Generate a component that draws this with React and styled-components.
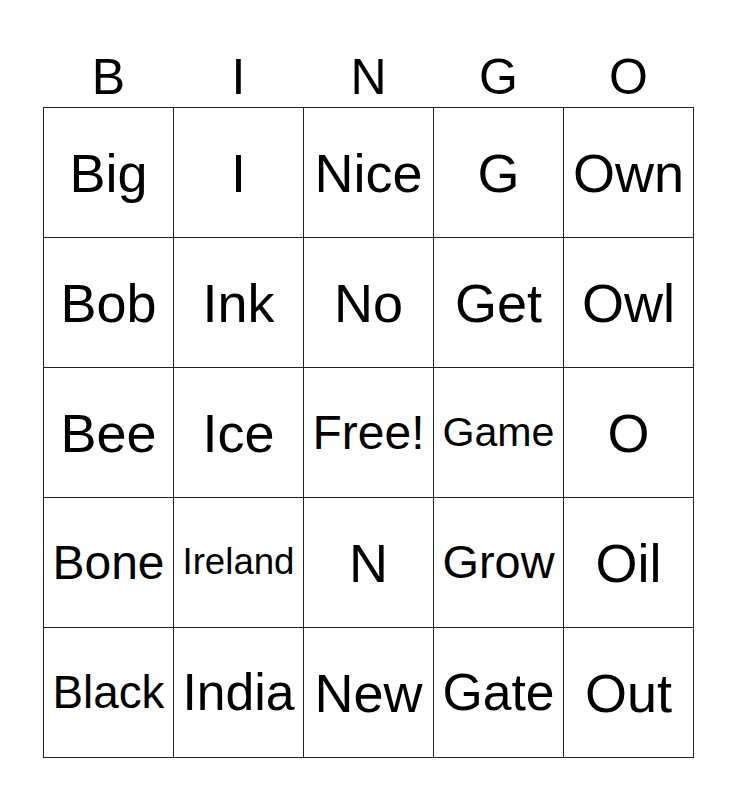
import React from "react";
import styled, { createGlobalStyle } from "styled-components";

const Global = createGlobalStyle`
  html, body { margin: 0; padding: 0; background: #fff; }
  body { font-family: "Liberation Sans", Arial, sans-serif; color: #000; }
`;

const Page = styled.div`
  padding: 52px 0 0 43px;
  width: 736px;
  height: 800px;
  box-sizing: border-box;
`;

const Header = styled.div`
  display: grid;
  grid-template-columns: repeat(5, 130px);
  height: 50px;
  margin-bottom: 5px;
`;

const HeaderLetter = styled.div`
  text-align: center;
  font-size: 50px;
  line-height: 50px;
  padding-left: 1px;
`;

const Board = styled.div`
  display: grid;
  grid-template-columns: repeat(5, 130px);
  grid-auto-rows: 130px;
  width: fit-content;
  border-left: 1px solid #222;
  border-top: 1px solid #222;
`;

const Cell = styled.div`
  border-right: 1px solid #222;
  border-bottom: 1px solid #222;
  display: flex;
  align-items: center;
  justify-content: center;
  text-align: center;
  white-space: nowrap;
  font-size: ${(p) => p.$size}px;
  line-height: 1;
`;

const widths = {
  A: 0.667, B: 0.667, C: 0.722, D: 0.722, E: 0.667, F: 0.611, G: 0.778, H: 0.722,
  I: 0.278, J: 0.5, K: 0.667, L: 0.556, M: 0.833, N: 0.722, O: 0.778, P: 0.667,
  Q: 0.778, R: 0.722, S: 0.667, T: 0.611, U: 0.722, V: 0.667, W: 0.944, X: 0.667,
  Y: 0.667, Z: 0.611,
  a: 0.556, b: 0.556, c: 0.5, d: 0.556, e: 0.556, f: 0.278, g: 0.556, h: 0.556,
  i: 0.222, j: 0.222, k: 0.5, l: 0.222, m: 0.833, n: 0.556, o: 0.556, p: 0.556,
  q: 0.556, r: 0.333, s: 0.5, t: 0.278, u: 0.556, v: 0.5, w: 0.722, x: 0.5,
  y: 0.5, z: 0.5, "!": 0.278, " ": 0.278,
};

const fit = (word) => {
  const em = [...word].reduce((s, c) => s + (widths[c] ?? 0.556), 0);
  return Math.min(54, 112 / em);
};

const letters = ["B", "I", "N", "G", "O"];

const words = [
  ["Big", "I", "Nice", "G", "Own"],
  ["Bob", "Ink", "No", "Get", "Owl"],
  ["Bee", "Ice", "Free!", "Game", "O"],
  ["Bone", "Ireland", "N", "Grow", "Oil"],
  ["Black", "India", "New", "Gate", "Out"],
];

export default function App() {
  return (
    <>
      <Global />
      <Page>
        <Header>
          {letters.map((l) => (
            <HeaderLetter key={l}>{l}</HeaderLetter>
          ))}
        </Header>
        <Board>
          {words.flat().map((w, i) => (
            <Cell key={i} $size={fit(w)}>
              {w}
            </Cell>
          ))}
        </Board>
      </Page>
    </>
  );
}
